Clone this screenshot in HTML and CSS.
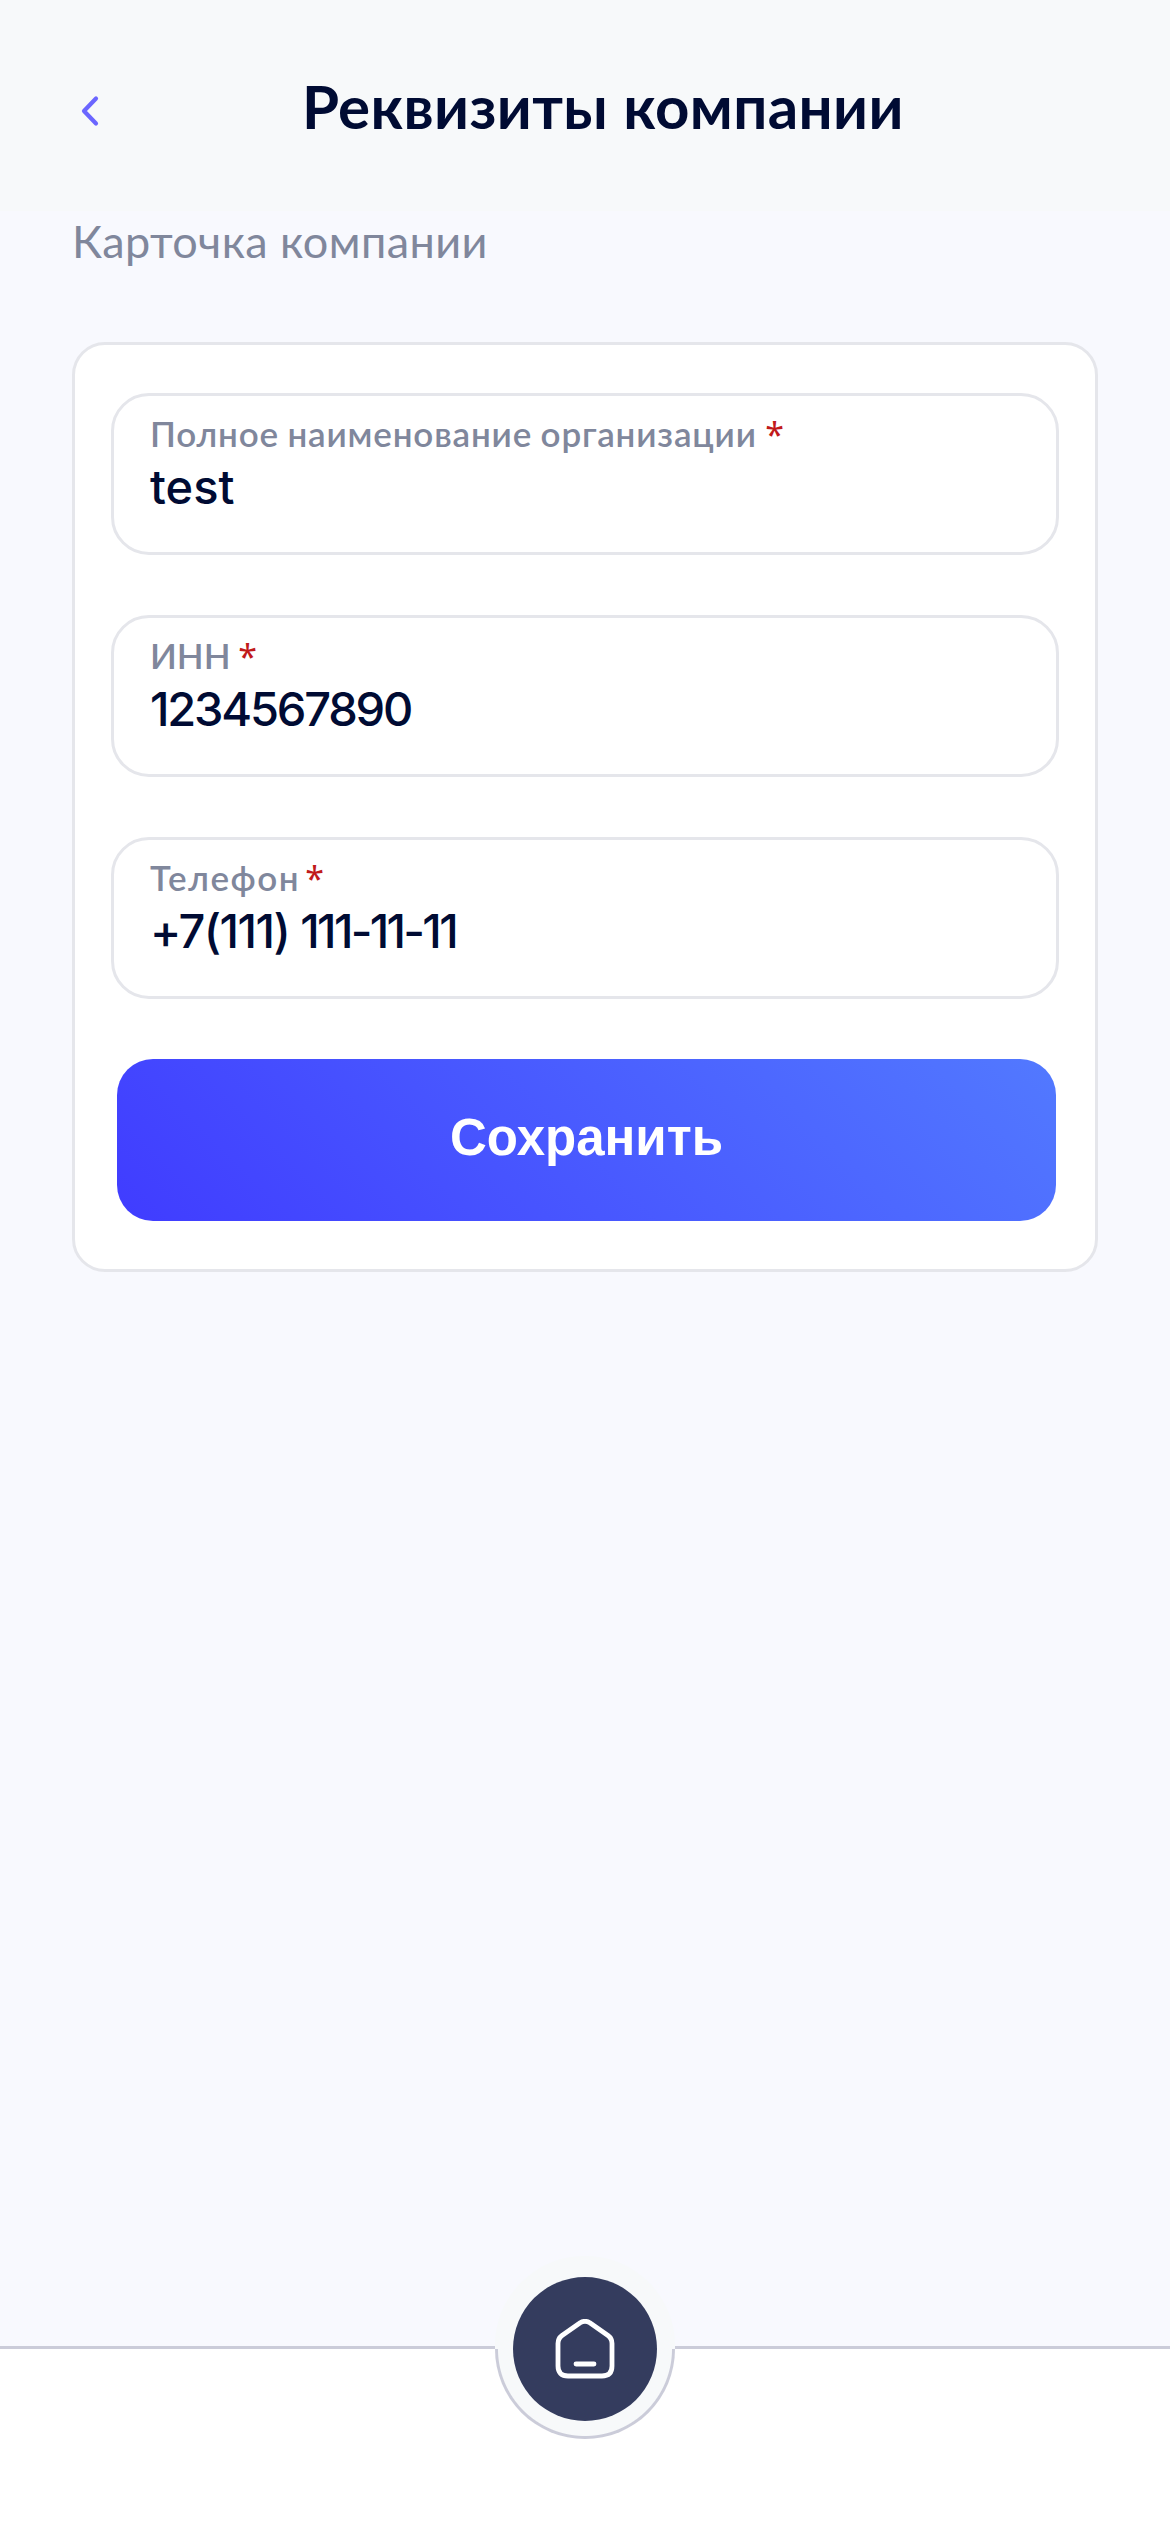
FILE: index.html
```html
<!DOCTYPE html>
<html lang="ru">
<head>
<meta charset="utf-8">
<title>Реквизиты компании</title>
<link rel="stylesheet" href="styles.css">
</head>
<body>
<div class="screen">
  <header class="header">
    <svg class="back" viewBox="0 0 24 36" fill="none" stroke="#6b66ff" stroke-width="4.200" stroke-linecap="round" stroke-linejoin="round"><path d="M19 5.500 7 18 19 30.500"/></svg>
    <h1 class="title">Реквизиты компании</h1>
  </header>
  <main class="content">
    <h2 class="subtitle">Карточка компании</h2>
    <form class="card">
      <div class="field">
        <div class="label">Полное наименование организации <span class="req">*</span></div>
        <div class="value">test</div>
      </div>
      <div class="field">
        <div class="label label-inn">ИНН <span class="req">*</span></div>
        <div class="value digits">1234567890</div>
      </div>
      <div class="field">
        <div class="label label-phone">Телефон <span class="req">*</span></div>
        <div class="value"><span class="code">+7(111) </span><span class="number">111-11-11</span></div>
      </div>
      <button class="save" type="button">Сохранить</button>
    </form>
  </main>
  <nav class="tabbar">
    <div class="notch">
      <div class="home">
        <svg viewBox="0 0 60 60" width="60" height="60" fill="none" stroke="#fff" stroke-width="4.800" stroke-linecap="round" stroke-linejoin="round"><path d="M3 24.500Q3 19.500 7 16.500L25.200 3.700Q30 0.900 34.800 3.700L53 16.500Q57 19.500 57 24.500V47Q57 57 47 57H13Q3 57 3 47Z"/><path d="M21 45H39"/></svg>
      </div>
    </div>
  </nav>
</div>
</body>
</html>
```
FILE: styles.css
```css
* { box-sizing: border-box; }
body { margin: 0; background: #f8f9fe; }
.screen {
  width: 1170px;
  height: 2532px;
  display: flex;
  flex-direction: column;
  background: #f8f9fe;
  color: #000b33;
  font-family: Lato, "Noto Sans", sans-serif;
  overflow: hidden;
}
.header {
  height: 211px;
  flex: none;
  display: flex;
  align-items: flex-start;
  background: #f7f9fa;
}
.back { width: 24px; height: 36px; margin: 93px 0 0 77px; }
.title {
  margin: 66px 0 0 201px;
  font-size: 60px;
  line-height: 80px;
  font-weight: 700;
  letter-spacing: 0.380px;
  white-space: nowrap;
}
.content { flex: 1; padding: 0 72px; }
.subtitle {
  margin: 0;
  height: 131px;
  font-size: 45px;
  line-height: 60px;
  font-weight: 400;
  letter-spacing: 0.400px;
  color: #80879c;
}
.card {
  height: 930px;
  border: 3px solid #e5e6eb;
  border-radius: 33px;
  background: #fff;
  padding: 48px 36px;
  display: flex;
  flex-direction: column;
  gap: 60px;
}
.field {
  height: 162px;
  border: 3px solid #e5e6eb;
  border-radius: 38px;
  padding: 16px 36px 18px;
}
.label {
  height: 44px;
  font-size: 35px;
  line-height: 42px;
  font-weight: 600;
  letter-spacing: 0.820px;
  word-spacing: -1px;
  color: #80879c;
  white-space: nowrap;
}
.label-inn { letter-spacing: 0; }
.label-phone { letter-spacing: 1.500px; word-spacing: -5px; }
.req {
  font-family: "Noto Sans", sans-serif;
  font-size: 34px;
  line-height: 1;
  font-weight: 400;
  color: #c11a1a;
}
.value {
  font-family: Inter, sans-serif;
  font-size: 47px;
  font-weight: 500;
  line-height: 62px;
  white-space: nowrap;
}
.digits { letter-spacing: -2.200px; }
.code { letter-spacing: -1.600px; }
.number { letter-spacing: -2.700px; }
.save {
  height: 162px;
  margin: 0 3px 0 6px;
  padding: 0 0 4px;
  border: 0;
  border-radius: 36px;
  background: linear-gradient(45deg, #403cff, #5279ff);
  color: #fff;
  font: bold 51px/60px "Liberation Sans", sans-serif;
}
.tabbar {
  flex: none;
  height: 186px;
  border-top: 3px solid #cbccd9;
  background: #fff;
  display: flex;
  justify-content: center;
}
.notch {
  width: 180px;
  height: 183px;
  margin-top: -93px;
  padding-top: 3px;
  border-radius: 90px;
  display: flex;
  align-items: center;
  justify-content: center;
  background:
    radial-gradient(circle at 50% 93px, #f7f9fa 86.500px, transparent 87.500px),
    linear-gradient(#f7f9fa 93px, #cbccd9 93px);
}
.home {
  width: 144px;
  height: 144px;
  border-radius: 50%;
  background: #343c5e;
  display: flex;
  align-items: center;
  justify-content: center;
}
```
